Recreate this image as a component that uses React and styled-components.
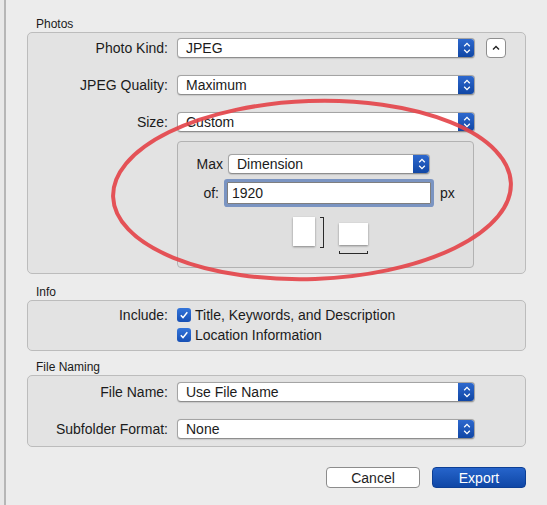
import React from "react";
import styled, { createGlobalStyle } from "styled-components";

const GlobalStyle = createGlobalStyle`
  html, body {
    margin: 0;
    padding: 0;
    background: #e8e8e8;
  }
  body {
    font-family: "Liberation Sans", Arial, sans-serif;
    font-size: 14px;
    color: #1b1b1b;
  }
`

const Stepper = () => (
  <StepperBox>
    <svg width="8" height="12" viewBox="0 0 8 12">
      <path d="M1.2 4.2 L4 1.4 L6.8 4.2" fill="none" stroke="#fff" strokeWidth="1.3" />
      <path d="M1.2 7.8 L4 10.6 L6.8 7.8" fill="none" stroke="#fff" strokeWidth="1.3" />
    </svg>
  </StepperBox>
)

const Popup = ({ value, width }) => (
  <PopupBox width={width}>
    <PopupText>{value}</PopupText>
    <Stepper />
  </PopupBox>
)

const Check = ({ children }) => (
  <CheckItem>
    <CheckBox>
      <svg width="10" height="10" viewBox="0 0 10 10">
        <path d="M1.8 5.3 L4 7.6 L8.3 2.2" fill="none" stroke="#fff" strokeWidth="1.5" />
      </svg>
    </CheckBox>
    <span>{children}</span>
  </CheckItem>
)

const App = () => {
  return (
    <Page>
      <GlobalStyle />
      <Window>
        <SectionTitle>Photos</SectionTitle>
        <GroupBox pad="5px 0 5px 0">
          <Row>
            <Label>Photo Kind:</Label>
            <Popup value="JPEG" />
            <Disclosure>
              <svg width="10" height="8" viewBox="0 0 10 8">
                <path d="M2 5.5 L5 2.5 L8 5.5" fill="none" stroke="#222" strokeWidth="1.4" />
              </svg>
            </Disclosure>
          </Row>
          <Row top={17}>
            <Label>JPEG Quality:</Label>
            <Popup value="Maximum" />
          </Row>
          <Row top={17}>
            <Label>Size:</Label>
            <Popup value="Custom" />
          </Row>
          <Row top={9} auto>
            <Label />
            <SubPanel>
              <SubRow gap={5}>
                <SubLabel>Max</SubLabel>
                <Popup value="Dimension" width={202} />
              </SubRow>
              <SubRow top={8} gap={8}>
                <SubLabel pr={4}>of:</SubLabel>
                <Field>1920</Field>
                <Unit>px</Unit>
              </SubRow>
              <Orientations>
                <Portrait />
                <SideBracket />
                <LandscapeCol>
                  <Landscape />
                  <BottomBracket />
                </LandscapeCol>
              </Orientations>
            </SubPanel>
          </Row>
        </GroupBox>

        <SectionTitle top={11}>Info</SectionTitle>
        <GroupBox pad="4px 0 5px 0">
          <Row>
            <Label>Include:</Label>
            <Check>Title, Keywords, and Description</Check>
          </Row>
          <Row>
            <Label />
            <Check>Location Information</Check>
          </Row>
        </GroupBox>

        <SectionTitle top={9}>File Naming</SectionTitle>
        <GroupBox pad="6px 0 7px 0">
          <Row>
            <Label>File Name:</Label>
            <Popup value="Use File Name" />
          </Row>
          <Row top={17}>
            <Label>Subfolder Format:</Label>
            <Popup value="None" />
          </Row>
        </GroupBox>

        <Footer>
          <Button>Cancel</Button>
          <Button primary>Export</Button>
        </Footer>
      </Window>

      <Annotation width="547" height="505" viewBox="0 0 547 505">
        <ellipse
          cx="312"
          cy="190"
          rx="199"
          ry="89"
          transform="rotate(-2 312 190)"
          fill="none"
          stroke="#e4454b"
          strokeWidth="4"
          opacity="0.92"
        />
      </Annotation>
    </Page>
  )
}

const Page = styled.div`
  position: relative;
  width: 547px;
  height: 505px;
  padding-left: 4px;
  box-sizing: border-box;
  background: #e8e8e8;
  overflow: hidden;
`

const Window = styled.div`
  width: 543px;
  height: 505px;
  box-sizing: border-box;
  border-left: 2px solid #b6b6b6;
  background: #ececec;
  padding: 17px 21px 0 21px;
`

const SectionTitle = styled.div`
  font-size: 12px;
  line-height: 14px;
  height: 14px;
  padding-left: 9px;
  margin-top: ${props => props.top || 0}px;
  margin-bottom: 1px;
  color: #1a1a1a;
`

const GroupBox = styled.div`
  width: 499px;
  box-sizing: border-box;
  border: 1px solid #bcbcbc;
  border-radius: 5px;
  background: #e3e3e3;
  padding: ${props => props.pad};
`

const Row = styled.div`
  display: flex;
  align-items: ${props => props.auto ? 'flex-start' : 'center'};
  height: ${props => props.auto ? 'auto' : '20px'};
  margin-top: ${props => props.top || 0}px;
`

const Label = styled.div`
  width: 149px;
  flex: none;
  box-sizing: border-box;
  padding-right: 9px;
  text-align: right;
  white-space: nowrap;
`

const PopupBox = styled.div`
  display: flex;
  align-items: stretch;
  width: ${props => props.width || 298}px;
  height: 20px;
  box-sizing: border-box;
  border: 1px solid #a4a4a4;
  border-bottom-color: #8e8e8e;
  border-radius: 4px;
  background: #fff;
  overflow: hidden;
  box-shadow: 0 0.5px 1px rgba(0, 0, 0, 0.12);
`

const PopupText = styled.div`
  flex: 1;
  padding-left: 8px;
  line-height: 18px;
  white-space: nowrap;
`

const StepperBox = styled.div`
  width: 17px;
  flex: none;
  margin: -1px -1px -1px 0;
  display: flex;
  align-items: center;
  justify-content: center;
  background: linear-gradient(#2f6ad0, #0f45a3);
  border-radius: 0 4px 4px 0;
`

const Disclosure = styled.div`
  margin-left: 11px;
  width: 20px;
  height: 20px;
  box-sizing: border-box;
  border: 1px solid #8e8e8e;
  border-radius: 4px;
  background: #fff;
  display: flex;
  align-items: center;
  justify-content: center;
`

const SubPanel = styled.div`
  width: 297px;
  height: 127px;
  box-sizing: border-box;
  border: 1px solid #b2b2b2;
  border-radius: 4px;
  background: #dfdfdf;
  padding-top: 12px;
`

const SubRow = styled.div`
  display: flex;
  align-items: center;
  gap: ${props => props.gap || 0}px;
  margin-top: ${props => props.top || 0}px;
`

const SubLabel = styled.div`
  width: 45px;
  flex: none;
  box-sizing: border-box;
  padding-right: ${props => props.pr || 0}px;
  margin-right: ${props => props.pr ? -props.pr : 0}px;
  text-align: right;
`

const Field = styled.div`
  width: 204px;
  height: 22px;
  box-sizing: border-box;
  border: 1px solid #7f7f7f;
  background: #fff;
  padding-left: 4px;
  line-height: 20px;
  box-shadow: 0 0 0 3px #7a94c2;
  border-radius: 1px;
`

const Unit = styled.div`
  margin-left: 1px;
`

const Orientations = styled.div`
  display: flex;
  align-items: flex-start;
  margin-top: 13px;
  padding-left: 115px;
`

const Portrait = styled.div`
  width: 22px;
  height: 29px;
  background: #fff;
  box-shadow: 0 1px 2px rgba(0, 0, 0, 0.4);
`

const SideBracket = styled.div`
  margin-left: 5px;
  width: 3px;
  height: 29px;
  border: 1px solid #2a2a2a;
  border-left: none;
`

const LandscapeCol = styled.div`
  display: flex;
  flex-direction: column;
  margin-left: 15px;
  margin-top: 6px;
`

const Landscape = styled.div`
  width: 29px;
  height: 22px;
  background: #fff;
  box-shadow: 0 1px 2px rgba(0, 0, 0, 0.4);
`

const BottomBracket = styled.div`
  margin-top: 6px;
  height: 2px;
  border: 1px solid #2a2a2a;
  border-top: none;
`

const CheckItem = styled.div`
  display: flex;
  align-items: center;
  gap: 4px;
  white-space: nowrap;
`

const CheckBox = styled.div`
  width: 14px;
  height: 14px;
  border-radius: 3px;
  background: linear-gradient(#3475da, #1750b5);
  display: flex;
  align-items: center;
  justify-content: center;
`

const Footer = styled.div`
  display: flex;
  justify-content: flex-end;
  gap: 12px;
  margin-top: 20px;
  width: 499px;
`

const Button = styled.div`
  width: 94px;
  height: 21px;
  box-sizing: border-box;
  border-radius: 4px;
  display: flex;
  align-items: center;
  justify-content: center;
  border: 1px solid ${props => props.primary ? '#0d3f95' : '#8c8c8c'};
  background: ${props => props.primary ? 'linear-gradient(#2664cb, #0f47a6)' : '#fff'};
  color: ${props => props.primary ? '#fff' : '#1e1e1e'};
`

const Annotation = styled.svg`
  position: absolute;
  left: 0;
  top: 0;
  pointer-events: none;
`

export default App;
